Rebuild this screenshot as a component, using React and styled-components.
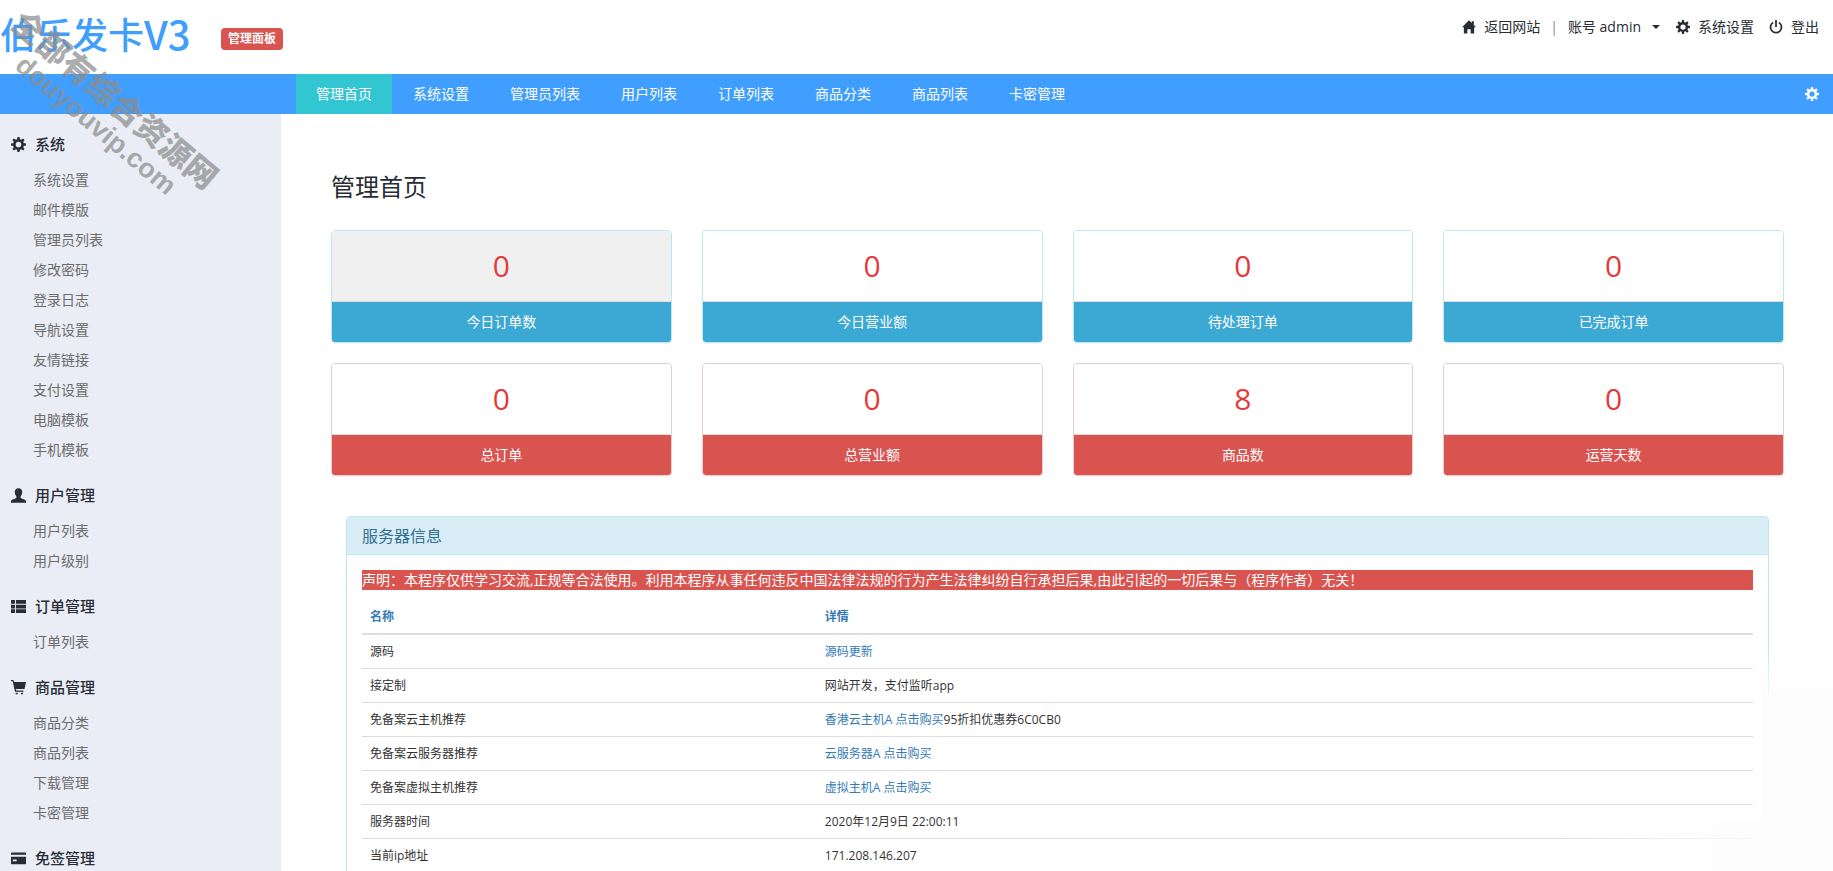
import React from "react";
import styled, { createGlobalStyle, ThemeProvider } from "styled-components";

const theme = {
  primary: "#409eff",
  selected: "#32c5d2",
  info: "#3ba9d4",
  infoBorder: "#bce8f1",
  infoLight: "#d9edf7",
  danger: "#d9534f",
  dangerBorder: "#ebccd1",
  link: "#337ab7",
  textDark: "#272c35",
  sidebar: "#eaedf5",
};

const topNav = [
  "管理首页",
  "系统设置",
  "管理员列表",
  "用户列表",
  "订单列表",
  "商品分类",
  "商品列表",
  "卡密管理",
];

const sections = [
  {
    title: "系统",
    icon: "cog",
    items: [
      "系统设置",
      "邮件模版",
      "管理员列表",
      "修改密码",
      "登录日志",
      "导航设置",
      "友情链接",
      "支付设置",
      "电脑模板",
      "手机模板",
    ],
  },
  { title: "用户管理", icon: "user", items: ["用户列表", "用户级别"] },
  { title: "订单管理", icon: "list", items: ["订单列表"] },
  {
    title: "商品管理",
    icon: "cart",
    items: ["商品分类", "商品列表", "下载管理", "卡密管理"],
  },
  { title: "免签管理", icon: "card", items: [] },
];

const stats = [
  { label: "今日订单数", value: 0, kind: "info", hovered: true },
  { label: "今日营业额", value: 0, kind: "info" },
  { label: "待处理订单", value: 0, kind: "info" },
  { label: "已完成订单", value: 0, kind: "info" },
  { label: "总订单", value: 0, kind: "danger" },
  { label: "总营业额", value: 0, kind: "danger" },
  { label: "商品数", value: 8, kind: "danger" },
  { label: "运营天数", value: 0, kind: "danger" },
];

const serverInfo = [
  { name: "源码", link: "源码更新" },
  { name: "接定制", text: "网站开发，支付监听app" },
  {
    name: "免备案云主机推荐",
    link: "香港云主机A 点击购买",
    text: "95折扣优惠券6C0CB0",
  },
  { name: "免备案云服务器推荐", link: "云服务器A 点击购买" },
  { name: "免备案虚拟主机推荐", link: "虚拟主机A 点击购买" },
  { name: "服务器时间", text: "2020年12月9日 22:00:11" },
  { name: "当前ip地址", text: "171.208.146.207" },
];

const shapes = {
  home: (
    <path d="M8 .3 11.200 3.500V1.300h2.300v4.500L16 8.300H13.900V15.500H9.900V10.500H6.100v5H2.100V8.300H0z" />
  ),
  cog: (
    <>
      <circle cx="8" cy="8" r="4.400" fill="none" stroke="currentColor" strokeWidth="2.800" />
      {[0, 45, 90, 135, 180, 225, 270, 315].map((angle) => (
        <path
          key={angle}
          d="M6.400 3 6.900 0h2.200l.5 3z"
          transform={`rotate(${angle} 8 8)`}
        />
      ))}
    </>
  ),
  off: (
    <>
      <path
        d="M4.700 2.800a6.300 6.300 0 1 0 6.600 0"
        fill="none"
        stroke="currentColor"
        strokeWidth="2"
      />
      <path d="M7 0h2v8H7z" />
    </>
  ),
  user: (
    <path d="M8 .3c2.500 0 4 1.600 4 3.900 0 1.900-.8 3.700-1.800 4.800v1.300c.3 1 5.800 1.800 5.800 3.700v1.700H0V14c0-1.900 5.500-2.700 5.800-3.700V9C4.800 7.900 4 6.100 4 4.200 4 1.900 5.500.3 8 .3z" />
  ),
  list: (
    <path d="M0 1h4.300v4H0zM5.300 1H16v4H5.300zM0 6h4.300v4H0zM5.300 6H16v4H5.300zM0 11h4.300v4H0zM5.300 11H16v4H5.300z" />
  ),
  cart: (
    <path d="M0 0h2.600l.6 2H16l-1.600 7.500H5.200l.4 1.700h7.700v1.300H4.300L1.800 1.300H0zM5 13.500h2.200v1.800H5zM10.600 13.500h2.200v1.800h-2.200z" />
  ),
  card: (
    <path
      fillRule="evenodd"
      d="M1 1.500h14a1 1 0 0 1 1 1v1.600H0V2.500a1 1 0 0 1 1-1zM0 6h16v7.200a1 1 0 0 1-1 1H1a1 1 0 0 1-1-1zM2 9v2h4V9z"
    />
  ),
};

const Icon = ({ name, size = 14 }) => (
  <Glyph viewBox="0 0 16 16" width={size} height={size} aria-hidden="true">
    {shapes[name]}
  </Glyph>
);

const App = () => {
  return (
    <ThemeProvider theme={theme}>
      <GlobalStyle />
      <Page>
        <Header>
          <Brand href="#">
            伯乐发卡<BrandVersion>V3</BrandVersion>
          </Brand>
          <Badge>管理面板</Badge>
          <UserLinks>
            <UserLink href="#">
              <Icon name="home" />
              返回网站
            </UserLink>
            <Divider>|</Divider>
            <AccountButton type="button">
              账号 admin
              <Caret />
            </AccountButton>
            <UserLink href="#">
              <Icon name="cog" />
              系统设置
            </UserLink>
            <UserLink href="#">
              <Icon name="off" />
              登出
            </UserLink>
          </UserLinks>
        </Header>

        <NavBar>
          {topNav.map((name, key) => (
            <NavItem key={name} href="#" className={key === 0 ? "active" : ""}>
              {name}
            </NavItem>
          ))}
          <NavButton type="button" aria-label="设置">
            <Icon name="cog" />
          </NavButton>
        </NavBar>

        <Body>
          <Sidebar>
            {sections.map((section) => (
              <Section key={section.title}>
                <SectionTitle>
                  <Icon name={section.icon} size={15} />
                  {section.title}
                </SectionTitle>
                {section.items.map((item) => (
                  <SidebarLink key={item} href="#">
                    {item}
                  </SidebarLink>
                ))}
              </Section>
            ))}
          </Sidebar>

          <Main>
            <Title>管理首页</Title>
            <Stats>
              {stats.map((stat) => (
                <Card key={stat.label} $kind={stat.kind}>
                  <CardValue $hovered={stat.hovered}>{stat.value}</CardValue>
                  <CardLabel $kind={stat.kind}>{stat.label}</CardLabel>
                </Card>
              ))}
            </Stats>

            <Panel>
              <PanelTitle>服务器信息</PanelTitle>
              <PanelBody>
                <Notice>
                  声明：本程序仅供学习交流,正规等合法使用。利用本程序从事任何违反中国法律法规的行为产生法律纠纷自行承担后果,由此引起的一切后果与（程序作者）无关！
                </Notice>
                <Table>
                  <thead>
                    <tr>
                      <NameHead scope="col">名称</NameHead>
                      <Head scope="col">详情</Head>
                    </tr>
                  </thead>
                  <tbody>
                    {serverInfo.map((row) => (
                      <tr key={row.name}>
                        <Cell>{row.name}</Cell>
                        <Cell>
                          {row.link && <CellLink href="#">{row.link}</CellLink>}
                          {row.text}
                        </Cell>
                      </tr>
                    ))}
                  </tbody>
                </Table>
              </PanelBody>
            </Panel>
          </Main>
        </Body>

        <Watermark aria-hidden="true">
          <WatermarkName>全部有综合资源网</WatermarkName>
          <WatermarkSite>douyouvip.com</WatermarkSite>
        </Watermark>
        <CornerFade />
      </Page>
    </ThemeProvider>
  );
};

const GlobalStyle = createGlobalStyle`
  * {
    box-sizing: border-box;
  }

  body {
    margin: 0;
    background: #fff;
    color: #333;
    font-family: "Open Sans", "Noto Sans CJK SC", sans-serif;
    font-size: 14px;
    line-height: 20px;
  }

  a {
    text-decoration: none;
  }

  button {
    border: 0;
    padding: 0;
    background: none;
    font: inherit;
    cursor: pointer;
  }
`;

const Glyph = styled.svg`
  display: block;
  flex: none;
  fill: currentColor;
`;

const Page = styled.div`
  position: relative;
  display: flex;
  flex-direction: column;
  height: 100vh;
  overflow: hidden;
`;

const Header = styled.header`
  display: flex;
  flex: none;
  align-items: flex-start;
  height: 74px;
  padding-right: 14px;
`;

const Brand = styled.a`
  display: flex;
  align-items: center;
  width: 221px;
  height: 66px;
  color: ${(props) => props.theme.primary};
  font-family: "Noto Sans CJK SC", sans-serif;
  font-size: 36px;
  font-weight: 500;
  white-space: nowrap;
`;

const BrandVersion = styled.span`
  font-size: 40px;
`;

const Badge = styled.span`
  margin-top: 28px;
  padding: 0 7px;
  border-radius: 4px;
  background-color: ${(props) => props.theme.danger};
  color: #fff;
  font-size: 12px;
  font-weight: 700;
  line-height: 22px;
`;

const UserLinks = styled.div`
  display: flex;
  align-items: center;
  gap: 15px;
  margin-top: 17px;
  margin-left: auto;
  color: ${(props) => props.theme.textDark};
`;

const UserLink = styled.a`
  display: flex;
  align-items: center;
  gap: 8px;
  color: inherit;
`;

const Divider = styled.span`
  margin: 0 -5px;
  color: #888;
`;

const AccountButton = styled.button`
  display: flex;
  align-items: center;
  gap: 11px;
  margin-right: 1px;
  color: inherit;
`;

const Caret = styled.span`
  border-top: 4px solid currentColor;
  border-right: 4px solid transparent;
  border-left: 4px solid transparent;
`;

const NavBar = styled.nav`
  display: flex;
  flex: none;
  gap: 1px;
  padding: 0 14px 0 296px;
  background-color: ${(props) => props.theme.primary};
`;

const NavItem = styled.a`
  padding: 0 20px;
  color: #fff;
  line-height: 40px;

  &.active {
    background-color: ${(props) => props.theme.selected};
  }
`;

const NavButton = styled.button`
  margin-left: auto;
  color: #fff;
`;

const Body = styled.div`
  display: flex;
  flex: 1;
  min-height: 0;
`;

const Sidebar = styled.aside`
  flex: none;
  width: 281px;
  padding-top: 11px;
  overflow: hidden;
  background-color: ${(props) => props.theme.sidebar};
`;

const Section = styled.div`
  margin-bottom: 11px;
`;

const SectionTitle = styled.h2`
  display: flex;
  align-items: center;
  gap: 9px;
  height: 38px;
  margin: 0 0 2px;
  padding-left: 11px;
  color: ${(props) => props.theme.textDark};
  font-size: 15px;
  font-weight: 500;
`;

const SidebarLink = styled.a`
  display: block;
  padding-left: 33px;
  color: #6c6c6c;
  line-height: 30px;
`;

const Main = styled.main`
  flex: 1;
  min-width: 0;
  padding: 53px 49px 0 50px;
`;

const Title = styled.h1`
  margin: 0 0 23px;
  color: ${(props) => props.theme.textDark};
  font-size: 24px;
  font-weight: 400;
  line-height: 40px;
`;

const Stats = styled.div`
  display: grid;
  grid-template-columns: repeat(4, 1fr);
  gap: 20px 30px;
`;

const Card = styled.div`
  border: 1px solid ${(props) => props.theme[`${props.$kind}Border`]};
  border-radius: 4px;
  overflow: hidden;
  box-shadow: 0 1px 1px rgba(0, 0, 0, 0.05);
  text-align: center;
`;

const CardValue = styled.div`
  padding: 15px;
  border-bottom: 1px solid #ddd;
  background-color: ${(props) => (props.$hovered ? "#f0f0f0" : "#fff")};
  color: #e33b3b;
  font-size: 30px;
  line-height: 40px;
`;

const CardLabel = styled.div`
  background-color: ${(props) => props.theme[props.$kind]};
  color: #fff;
  line-height: 40px;
`;

const Panel = styled.section`
  margin: 40px 15px 0;
  border: 1px solid ${(props) => props.theme.infoBorder};
  border-radius: 4px;
`;

const PanelTitle = styled.h3`
  margin: 0;
  padding: 2px 15px 0;
  border-bottom: 1px solid ${(props) => props.theme.infoBorder};
  border-radius: 3px 3px 0 0;
  background-color: ${(props) => props.theme.infoLight};
  color: #31708f;
  font-size: 16px;
  font-weight: 400;
  line-height: 35px;
`;

const PanelBody = styled.div`
  padding: 15px;
`;

const Notice = styled.div`
  margin-bottom: 10px;
  background-color: ${(props) => props.theme.danger};
  color: #fff;
`;

const Table = styled.table`
  width: 100%;
  border-spacing: 0;
  table-layout: fixed;
  font-size: 12px;
  line-height: 17px;
`;

const Head = styled.th`
  padding: 8px;
  border-bottom: 2px solid #ddd;
  color: ${(props) => props.theme.link};
  font-weight: 700;
  text-align: left;
`;

const NameHead = styled(Head)`
  width: 32.7%;
`;

const Cell = styled.td`
  padding: 8px;
  border-bottom: 1px solid #ddd;
`;

const CellLink = styled.a`
  color: ${(props) => props.theme.link};
`;

/* Stamp lying across the top left corner of the page */
const Watermark = styled.div`
  position: absolute;
  top: 2px;
  left: 30px;
  color: rgba(140, 140, 140, 0.72);
  font-weight: 900;
  white-space: nowrap;
  transform: rotate(40deg);
  transform-origin: 0 0;
  pointer-events: none;
`;

const WatermarkName = styled.div`
  font-family: "Noto Sans CJK SC", sans-serif;
  font-size: 32px;
  line-height: 36px;
`;

const WatermarkSite = styled.div`
  padding-left: 30px;
  font-family: "Liberation Sans", sans-serif;
  font-size: 27px;
  line-height: 32px;
`;

const CornerFade = styled.div`
  position: absolute;
  right: 0;
  bottom: 0;
  width: 280px;
  height: 220px;
  background:
    linear-gradient(transparent, #fdfdfd 50px) right top / 72px 100% no-repeat,
    linear-gradient(90deg, transparent, #fdfdfd 80%) right bottom / 100% 50px
      no-repeat;
  pointer-events: none;
`;

export default App;
